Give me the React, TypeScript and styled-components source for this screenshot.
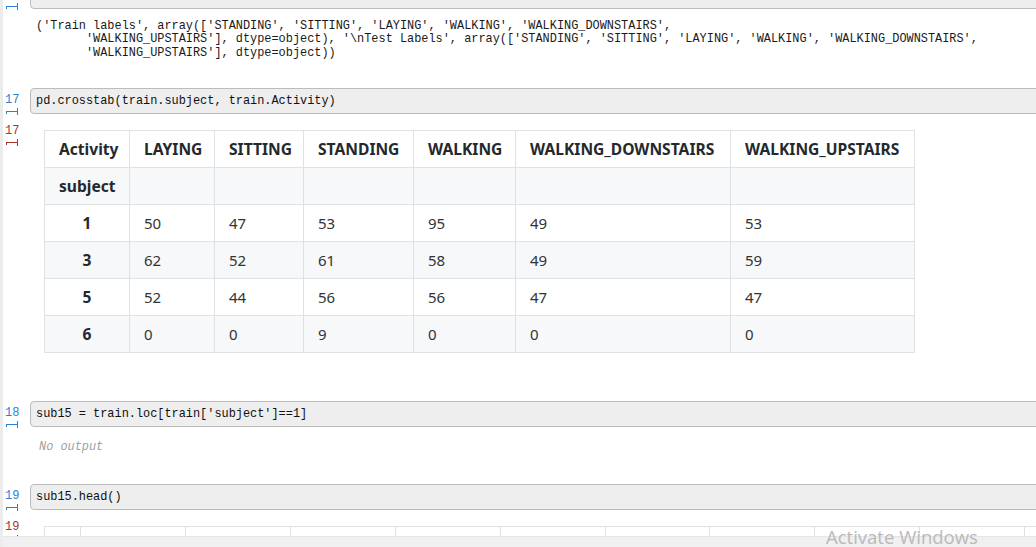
import React from "react";
import styled, { createGlobalStyle } from "styled-components";

const Global = createGlobalStyle`
  html, body { margin: 0; padding: 0; background: #fff; overflow: hidden; }
  #root { width: 1036px; height: 547px; }
`;

const Page = styled.div`
  position: relative;
  width: 1036px;
  height: 547px;
  display: flex;
  flex-direction: column;
  overflow: hidden;
  background: #fff;
  border-left: 3px solid #ececec;
  box-sizing: border-box;
`;

const Scroller = styled.div`
  flex: 1;
  overflow: hidden;
  display: flex;
  flex-direction: column;
`;

const Row = styled.div<{ $mt?: number }>`
  display: flex;
  align-items: flex-start;
  margin-top: ${(p) => p.$mt ?? 0}px;
`;

const Gutter = styled.div<{ $kind: "in" | "out"; $pt?: number }>`
  width: 27px;
  flex: none;
  box-sizing: border-box;
  padding-left: 2px;
  padding-top: ${(p) => p.$pt ?? 0}px;
  display: flex;
  flex-direction: column;
  align-items: flex-start;
  color: ${(p) => (p.$kind === "in" ? "#2f80d4" : "#a8352f")};
`;

const LineNo = styled.span`
  font-family: "Liberation Mono", "Courier New", monospace;
  font-size: 12px;
  line-height: 13px;
  height: 13px;
`;

const InputBox = styled.div`
  flex: 1;
  height: 26px;
  box-sizing: border-box;
  margin-right: -12px;
  background: #eeeeee;
  border: 1px solid #bcbcbc;
  border-radius: 4px;
  padding-left: 5px;
  font-family: "Liberation Mono", "Courier New", monospace;
  font-size: 11.9px;
  line-height: 24px;
  color: #111;
  white-space: pre;
`;

const Output = styled.div`
  flex: 1;
  min-width: 0;
`;

const Pre = styled.pre`
  margin: 0;
  padding: 10px 0 0 6px;
  font-family: "Liberation Mono", "Courier New", monospace;
  font-size: 11.9px;
  line-height: 13.3px;
  color: #1a1a1a;
`;

const NoOutput = styled.div`
  padding: 13px 0 0 9px;
  font-family: "Liberation Mono", "Courier New", monospace;
  font-style: italic;
  font-size: 11.9px;
  line-height: 13px;
  color: #a0a0a0;
`;

const Table = styled.table<{ $w: number }>`
  margin: 5px 0 0 14px;
  border-collapse: collapse;
  table-layout: fixed;
  width: ${(p) => p.$w}px;
  font-family: "Noto Sans", "Open Sans", sans-serif;
  font-size: 15px;
  color: #333;
`;

const Th = styled.th<{ $center?: boolean }>`
  height: 36px;
  padding: 0 14px;
  border: 1px solid #dfe2e5;
  font-size: 15.6px;
  font-weight: 700;
  color: #24292e;
  text-align: ${(p) => (p.$center ? "center" : "left")};
  white-space: nowrap;
  overflow: hidden;
`;

const Td = styled.td`
  height: 36px;
  padding: 0 14px;
  border: 1px solid #dfe2e5;
  text-align: left;
`;

const Tr = styled.tr<{ $shade?: boolean }>`
  background: ${(p) => (p.$shade ? "#f6f8fa" : "#fff")};
`;

const HScroll = styled.div`
  flex: none;
  height: 10px;
  background: #f0f0f0;
  border-top: 1px solid #e6e6e6;
`;

const Watermark = styled.div`
  position: absolute;
  left: 823px;
  top: 524px;
  font-family: "Open Sans", "Noto Sans", sans-serif;
  font-size: 18.5px;
  color: #b9b9b9;
  white-space: nowrap;
  pointer-events: none;
`;

const Marker = ({ color }: { color: string }) => (
  <svg width="14" height="8" viewBox="0 0 14 8" style={{ display: "block" }}>
    <path d="M1 4.5H13M12.5 1V8M1.5 4.5V7" stroke={color} strokeWidth="1" fill="none" />
  </svg>
);

const BLUE = "#2f80d4";
const RED = "#a8352f";

const InCell = ({ n, code, mt }: { n?: string; code: string; mt?: number }) => (
  <Row $mt={mt}>
    <Gutter $kind="in" $pt={6}>
      {n && <LineNo>{n}</LineNo>}
      <Marker color={BLUE} />
    </Gutter>
    <InputBox>{code}</InputBox>
  </Row>
);

const cols = ["LAYING", "SITTING", "STANDING", "WALKING", "WALKING_DOWNSTAIRS", "WALKING_UPSTAIRS"];
const widths = [85, 85, 89, 110, 102, 215, 184];
const data: [string, number[]][] = [
  ["1", [50, 47, 53, 95, 49, 53]],
  ["3", [62, 52, 61, 58, 49, 59]],
  ["5", [52, 44, 56, 56, 47, 47]],
  ["6", [0, 0, 9, 0, 0, 0]],
];

const outText = `('Train labels', array(['STANDING', 'SITTING', 'LAYING', 'WALKING', 'WALKING_DOWNSTAIRS',
       'WALKING_UPSTAIRS'], dtype=object), '\\nTest Labels', array(['STANDING', 'SITTING', 'LAYING', 'WALKING', 'WALKING_DOWNSTAIRS',
       'WALKING_UPSTAIRS'], dtype=object))`;

const headWidths = [36, 105, 105, 105, 105, 105, 104, 105, 105, 105, 105];
const headTotal = headWidths.reduce((a, b) => a + b, 0);

export default function App() {
  return (
    <>
      <Global />
      <Page>
        <Scroller>
          <Row $mt={-17}>
            <Gutter $kind="in" $pt={19}>
              <Marker color={BLUE} />
            </Gutter>
            <InputBox />
          </Row>
          <Row>
            <Gutter $kind="out" />
            <Output>
              <Pre>{outText}</Pre>
            </Output>
          </Row>

          <InCell n="17" code="pd.crosstab(train.subject, train.Activity)" mt={28} />
          <Row $mt={10}>
            <Gutter $kind="out">
              <LineNo>17</LineNo>
              <Marker color={RED} />
            </Gutter>
            <Output>
              <Table $w={870}>
                <colgroup>
                  {widths.map((w, i) => (
                    <col key={i} style={{ width: w }} />
                  ))}
                </colgroup>
                <thead>
                  <Tr>
                    <Th $center>Activity</Th>
                    {cols.map((c) => (
                      <Th key={c}>{c}</Th>
                    ))}
                  </Tr>
                  <Tr $shade>
                    <Th $center>subject</Th>
                    {cols.map((c) => (
                      <Th key={c} />
                    ))}
                  </Tr>
                </thead>
                <tbody>
                  {data.map(([idx, vals], r) => (
                    <Tr key={idx} $shade={r % 2 === 1}>
                      <Th $center>{idx}</Th>
                      {vals.map((v, i) => (
                        <Td key={i}>{v}</Td>
                      ))}
                    </Tr>
                  ))}
                </tbody>
              </Table>
            </Output>
          </Row>

          <InCell n="18" code="sub15 = train.loc[train['subject']==1]" mt={48} />
          <Row>
            <Gutter $kind="out" />
            <Output>
              <NoOutput>No output</NoOutput>
            </Output>
          </Row>

          <InCell n="19" code="sub15.head()" mt={30} />
          <Row $mt={10}>
            <Gutter $kind="out">
              <LineNo>19</LineNo>
              <Marker color={RED} />
            </Gutter>
            <Output>
              <Table $w={headTotal}>
                <colgroup>
                  {headWidths.map((w, i) => (
                    <col key={i} style={{ width: w }} />
                  ))}
                </colgroup>
                <thead>
                  <Tr>
                    {headWidths.map((_, i) => (
                      <Th key={i} />
                    ))}
                  </Tr>
                </thead>
              </Table>
            </Output>
          </Row>
        </Scroller>
        <HScroll />
        <Watermark>Activate Windows</Watermark>
      </Page>
    </>
  );
}
